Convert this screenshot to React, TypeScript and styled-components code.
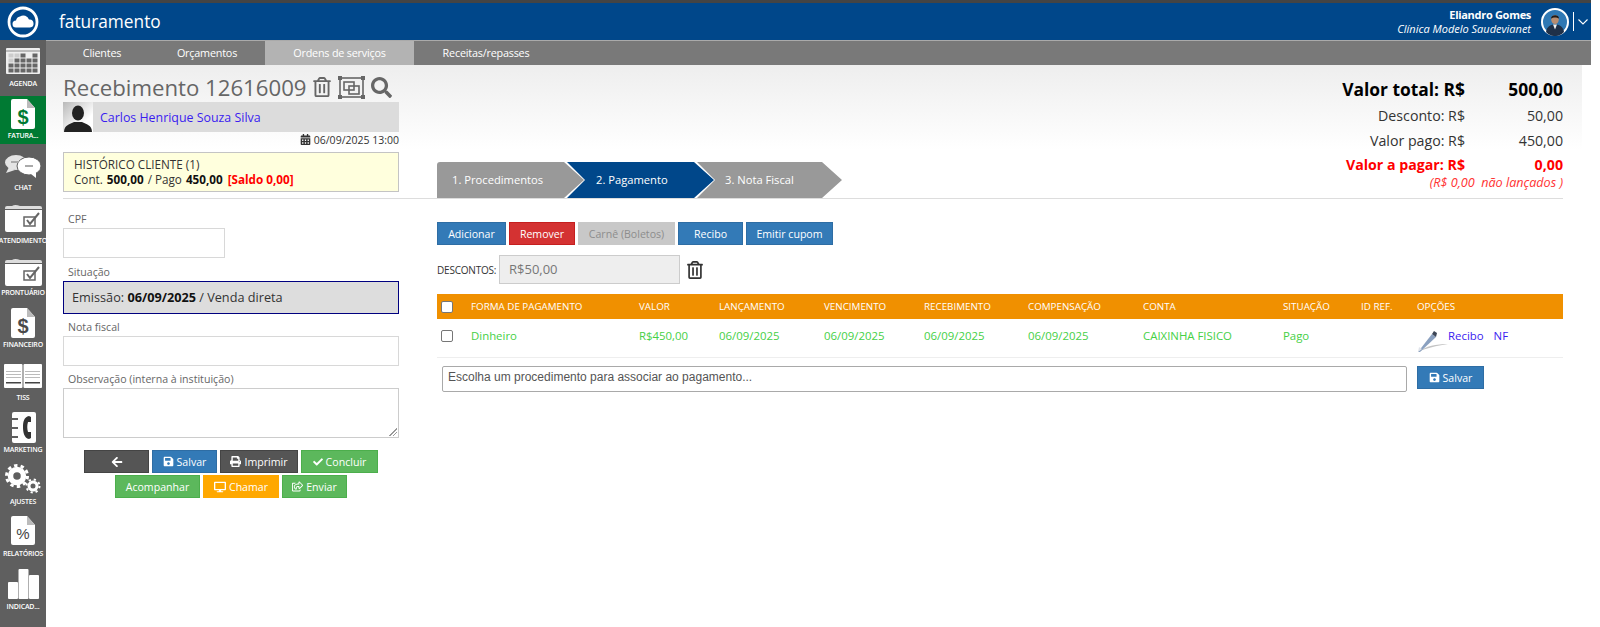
import React from "react";
import styled, { createGlobalStyle } from "styled-components";
import {
  FaArrowLeft,
  FaCalendarAlt,
  FaCheck,
  FaDesktop,
  FaPrint,
  FaRegShareSquare,
  FaRegTrashAlt,
  FaSave,
  FaSearch,
} from "react-icons/fa";

const GlobalStyle = createGlobalStyle`
  html, body {
    margin: 0;
    padding: 0;
    background: #fff;
  }
  body {
    font-family: "Open Sans", "Noto Sans", sans-serif;
    font-size: 11px;
    color: #333;
    overflow: hidden;
  }
`;

const Page = styled.div`
  display: flex;
  flex-direction: column;
  width: 1600px;
  height: 627px;
`;

const TopStrip = styled.div`
  height: 3px;
  width: 1591px;
  background: #444;
`;

const Shell = styled.div`
  display: flex;
  height: 624px;
`;

const Sidebar = styled.nav`
  width: 46px;
  flex: none;
  background: #5f5f5f;
  display: flex;
  flex-direction: column;
`;

const LogoBox = styled.div`
  height: 37px;
  background: #00478a;
  display: flex;
  align-items: center;
  justify-content: center;
`;

const NavItem = styled.div<{ $active?: boolean; $h: number; $pad: number }>`
  height: ${({ $h }) => $h}px;
  display: flex;
  flex-direction: column;
  align-items: center;
  justify-content: flex-end;
  padding-bottom: ${({ $pad }) => $pad}px;
  box-sizing: border-box;
  background: ${({ $active }) => ($active ? "#007a33" : "transparent")};
  overflow: hidden;
`;

const NavLabel = styled.span<{ $gap: number }>`
  font-size: 7px;
  font-weight: 600;
  letter-spacing: -0.2px;
  line-height: 9px;
  color: #fff;
  white-space: nowrap;
  margin-top: ${({ $gap }) => $gap}px;
`;

const Main = styled.div`
  flex: 1;
  display: flex;
  flex-direction: column;
  min-width: 0;
`;

const Header = styled.header`
  width: 1545px;
  height: 37px;
  background: #00478a;
  display: flex;
  align-items: center;
  padding: 0 3px 0 13px;
  box-sizing: border-box;
`;

const ModuleTitle = styled.div`
  font-size: 17.3px;
  color: #fff;
  flex: 1;
`;

const UserBlock = styled.div`
  text-align: right;
  color: #fff;
  line-height: 14px;
  font-size: 11px;
  margin-right: 10px;
`;

const UserName = styled.div`
  font-weight: 700;
  letter-spacing: -0.3px;
`;

const UserOrg = styled.div`
  font-style: italic;
`;

const Divider = styled.div`
  width: 1px;
  height: 19px;
  background: #fff;
  margin: 0 4px;
`;

const Tabs = styled.div`
  width: 1545px;
  height: 25px;
  background: #797979;
  border-top: 1px solid #aaa;
  box-sizing: border-box;
  padding-left: 9px;
  display: flex;
`;

const Tab = styled.div<{ $active?: boolean; $w: number }>`
  width: ${({ $w }) => $w}px;
  text-align: center;
  font-size: 10.8px;
  letter-spacing: -0.2px;
  line-height: 24px;
  color: #fff;
  background: ${({ $active }) => ($active ? "#b3b3b3" : "transparent")};
`;

const Content = styled.div`
  width: 1536px;
  flex: 1;
  padding: 0 19px 0 17px;
  box-sizing: border-box;
  background: linear-gradient(#eeeeee 0, #ffffff 85px);
  display: flex;
  flex-direction: column;
`;

const TopSection = styled.section`
  display: grid;
  grid-template-columns: 336px 1fr;
  column-gap: 38px;
  height: 134px;
  padding-top: 10px;
  box-sizing: border-box;
  border-bottom: 1px solid #ddd;
`;

const BottomSection = styled.section`
  display: grid;
  grid-template-columns: 336px 1fr;
  column-gap: 38px;
`;

const Column = styled.div`
  display: flex;
  flex-direction: column;
  min-width: 0;
`;

const TitleRow = styled.div`
  display: flex;
  align-items: center;
  height: 24px;
  color: #666;
  font-size: 22.2px;
  white-space: nowrap;
`;

const TitleIcon = styled.span<{ $ml: number }>`
  display: inline-flex;
  margin-left: ${({ $ml }) => $ml}px;
`;

const ClientBar = styled.div`
  display: flex;
  align-items: center;
  height: 30px;
  background: #dcdcdc;
  margin-top: 3px;
`;

const Avatar = styled.div`
  width: 30px;
  height: 30px;
  background: linear-gradient(135deg, #b9b9b9, #fff 70%);
  display: flex;
  align-items: flex-end;
  justify-content: center;
`;

const ClientName = styled.a`
  color: #3a1cf0;
  font-size: 12.4px;
  margin-left: 7px;
`;

const DateLine = styled.div`
  display: flex;
  justify-content: flex-end;
  align-items: center;
  gap: 3px;
  height: 15px;
  font-size: 10.5px;
  color: #333;
`;

const HistoryBox = styled.div`
  height: 40px;
  margin-top: 5px;
  padding: 4px 10px;
  box-sizing: border-box;
  background: #ffffdd;
  border: 1px solid #c4c4c4;
  font-size: 11.7px;
  line-height: 15px;
  color: #333;
  white-space: nowrap;
  b {
    color: #111;
    margin: 0 1px;
  }
`;

const Red = styled.b`
  && { color: #f00; }
`;

const FormColumn = styled(Column)`
  padding-top: 13px;
`;

const FieldLabel = styled.label`
  display: block;
  font-size: 10.6px;
  line-height: 15px;
  color: #666;
  margin-left: 5px;
`;

const Field = styled.div<{ $w?: number; $h: number; $mb: number }>`
  width: ${({ $w }) => ($w ? `${$w}px` : "100%")};
  height: ${({ $h }) => $h}px;
  margin: 1px 0 ${({ $mb }) => $mb}px;
  border: 1px solid #d8d8d8;
  box-sizing: border-box;
  background: #fff;
`;

const StatusBox = styled.div`
  height: 33px;
  margin: 1px 0 6px;
  border: 1px solid #00007f;
  box-sizing: border-box;
  background: #dddddd;
  padding-left: 8px;
  font-size: 12.7px;
  line-height: 31px;
  color: #333;
  b { color: #111; }
`;

const NoteBox = styled(Field)`
  position: relative;
  border-color: #ccc;

  &::after {
    content: "";
    position: absolute;
    right: 1px;
    bottom: 1px;
    width: 8px;
    height: 8px;
    background: linear-gradient(135deg, transparent 50%, #999 50%, #999 58%, transparent 58%, transparent 72%, #999 72%, #999 80%, transparent 80%);
  }
`;

const ActionRows = styled.div`
  display: flex;
  flex-wrap: wrap;
  justify-content: center;
  gap: 2px 3px;
  margin-top: 12px;
`;

const palette = {
  blue: ["#337ab7", "#2e6da4", "#fff"],
  dark: ["#555555", "#444444", "#fff"],
  green: ["#5cb85c", "#4cae4c", "#fff"],
  orange: ["#ffa800", "#ffa800", "#fff"],
  red: ["#d43232", "#c51f1f", "#fff"],
  gray: ["#c8c8c8", "#c8c8c8", "#8d8d8d"],
};

const Btn = styled.button<{ $kind: keyof typeof palette; $w: number }>`
  width: ${({ $w }) => $w}px;
  height: 23px;
  padding: 0;
  display: inline-flex;
  align-items: center;
  justify-content: center;
  gap: 3px;
  font-family: inherit;
  font-size: 10.6px;
  background: ${({ $kind }) => palette[$kind][0]};
  border: 1px solid ${({ $kind }) => palette[$kind][1]};
  color: ${({ $kind }) => palette[$kind][2]};
  border-radius: 0;
`;

const SummaryRow = styled.div`
  display: flex;
  justify-content: space-between;
  align-items: flex-end;
  height: 123px;
`;

const Stepper = styled.div`
  display: flex;
`;

const Step = styled.div<{ $active?: boolean; $w: number; $first?: boolean; $pad: number }>`
  width: ${({ $w }) => $w}px;
  height: 36px;
  margin-left: ${({ $first }) => ($first ? 0 : -17)}px;
  padding-left: ${({ $pad }) => $pad}px;
  box-sizing: border-box;
  font-size: 11.2px;
  line-height: 36px;
  color: #fff;
  background: ${({ $active }) => ($active ? "#00478a" : "#999999")};
  border-radius: ${({ $first }) => ($first ? "3px 0 0 0" : "0")};
  clip-path: ${({ $first }) =>
    $first
      ? "polygon(0 0, calc(100% - 20px) 0, 100% 50%, calc(100% - 20px) 100%, 0 100%)"
      : "polygon(0 0, calc(100% - 20px) 0, 100% 50%, calc(100% - 20px) 100%, 0 100%, 18px 50%)"};
`;

const Totals = styled.div`
  width: 240px;
  margin-bottom: 9px;
  color: #333;
`;

const TotalLine = styled.div<{ $size: number; $h: number; $bold?: boolean; $red?: boolean }>`
  display: grid;
  grid-template-columns: 1fr 98px;
  height: ${({ $h }) => $h}px;
  line-height: ${({ $h }) => $h}px;
  font-size: ${({ $size }) => $size}px;
  font-weight: ${({ $bold }) => ($bold ? 700 : 400)};
  color: ${({ $red, $bold }) => ($red ? "#f00" : $bold ? "#000" : "#333")};
  text-align: right;
  white-space: nowrap;
`;

const Pending = styled.div`
  text-align: right;
  font-size: 12.6px;
  font-style: italic;
  line-height: 12px;
  color: #f33;
  white-space: nowrap;
`;

const Toolbar = styled.div`
  display: flex;
  gap: 3px;
  margin-top: 23px;
`;

const DiscountRow = styled.div`
  display: flex;
  align-items: center;
  margin-top: 10px;
  height: 29px;
`;

const DiscountLabel = styled.span`
  font-size: 10px;
  letter-spacing: -0.2px;
  width: 62px;
  color: #333;
`;

const DiscountInput = styled.div`
  width: 181px;
  height: 29px;
  box-sizing: border-box;
  border: 1px solid #ccc;
  background: #eeeeee;
  padding-left: 9px;
  font-size: 13px;
  line-height: 27px;
  color: #777;
`;

const TrashButton = styled.span`
  display: inline-flex;
  margin-left: 6px;
  color: #333;
`;

const Table = styled.div`
  margin-top: 10px;
`;

const columns = "34px 168px 80px 105px 100px 104px 115px 140px 78px 56px 146px";

const HeadRow = styled.div`
  display: grid;
  grid-template-columns: ${columns};
  height: 25px;
  align-items: center;
  background: #f09000;
  color: #fff;
  font-size: 9.8px;
  white-space: nowrap;
`;

const BodyRow = styled.div`
  display: grid;
  grid-template-columns: ${columns};
  height: 39px;
  padding-bottom: 8px;
  align-items: center;
  border-bottom: 1px solid #eee;
  box-sizing: border-box;
  color: #45d045;
  font-size: 11.4px;
  white-space: nowrap;
`;

const Check = styled.span`
  width: 10px;
  height: 10px;
  margin-left: 4px;
  border: 1px solid #767676;
  border-radius: 2px;
  background: #fff;
  display: block;
`;

const OptionLinks = styled.div`
  display: flex;
  align-items: center;
  color: #3a1cf0;
`;

const Pencil = styled.span`
  display: inline-flex;
  width: 30px;
  margin: 12px 0 0 1px;
`;

const NfLink = styled.span`
  margin-left: 10px;
`;

const AssociateRow = styled.div`
  display: flex;
  align-items: flex-start;
  gap: 10px;
  margin-top: 8px;
  margin-left: 5px;
`;

const AssociateInput = styled.div`
  width: 965px;
  height: 26px;
  box-sizing: border-box;
  border: 1px solid #a9a9a9;
  border-radius: 2px;
  padding-left: 5px;
  font-family: "Liberation Sans", Arial, sans-serif;
  font-size: 12px;
  line-height: 20px;
  color: #555;
`;

const navItems = [
  { label: "AGENDA", h: 56, pad: 8.5, gap: 4.5, icon: "calendar" },
  { label: "FATURA...", h: 48, pad: 4.5, gap: 1.5, icon: "doc", active: true },
  { label: "CHAT", h: 52, pad: 4.5, gap: 4.5, icon: "chat" },
  { label: "ATENDIMENTO", h: 53, pad: 4.5, gap: 3.5, icon: "folder" },
  { label: "PRONTUÁRIO", h: 52, pad: 4.5, gap: 1.5, icon: "folder" },
  { label: "FINANCEIRO", h: 52, pad: 4.5, gap: 1.5, icon: "doc" },
  { label: "TISS", h: 53, pad: 4.5, gap: 4.5, icon: "book" },
  { label: "MARKETING", h: 52, pad: 4.5, gap: 1.5, icon: "phone" },
  { label: "AJUSTES", h: 52, pad: 4.5, gap: 2.5, icon: "gears" },
  { label: "RELATÓRIOS", h: 52, pad: 4.5, gap: 3.5, icon: "percent" },
  { label: "INDICAD...", h: 53, pad: 4.5, gap: 2.5, icon: "bars" },
];

const NavIcon = ({ kind, active }: { kind: string; active?: boolean }) => {
  const ink = active ? "#007a33" : "#4a4a4a";
  switch (kind) {
    case "calendar":
      return (
        <svg width="34" height="26" viewBox="0 0 34 26">
          <rect x="0" y="0" width="34" height="26" rx="1" fill="#eee" />
          <rect x="0" y="2.5" width="34" height="1" fill="#888" />
          {[0, 1, 2, 3].map((r) =>
            [0, 1, 2, 3, 4].map((c) => (
              <rect
                key={`${r}-${c}`}
                x={2.5 + c * 6}
                y={5.5 + r * 5}
                width="5"
                height="4"
                fill={r === 0 && c === 3 ? "#eee" : c + r < 2 ? "#ccc" : "#666"}
              />
            ))
          )}
        </svg>
      );
    case "doc":
      return (
        <svg width="24" height="30" viewBox="0 0 24 30">
          <path d="M2 0h14l8 9v19a2 2 0 0 1-2 2H2a2 2 0 0 1-2-2V2a2 2 0 0 1 2-2z" fill="#fff" />
          <path d="M16 0v9h8z" fill="#bbb" />
          <text x="12" y="24.5" textAnchor="middle" fontSize="20" fontWeight="700" fontFamily="Liberation Sans" fill={ink}>
            $
          </text>
        </svg>
      );
    case "chat":
      return (
        <svg width="36" height="23" viewBox="0 0 36 23">
          <ellipse cx="11" cy="7.5" rx="11" ry="7.5" fill="#e4e4e4" />
          <path d="M4 12l-3 6 9-3z" fill="#e4e4e4" />
          <ellipse cx="24" cy="11" rx="12" ry="9" fill="#fff" stroke="#5f5f5f" />
          <path d="M26 19l5 4 0-6z" fill="#fff" />
          <rect x="6" y="6" width="8" height="2" fill="#aaa" />
          <rect x="20" y="10" width="8" height="2" fill="#aaa" />
        </svg>
      );
    case "folder":
      return (
        <svg width="37" height="27" viewBox="0 0 37 27">
          <path d="M0 3q0-2 2-2h5q3-2 8 0h20q2 0 2 2v1H0z" fill="#ddd" />
          <path d="M0 5h37v20q0 2-2 2H2q-2 0-2-2z" fill="#fff" />
          <rect x="19" y="12" width="11" height="9" fill="none" stroke="#666" strokeWidth="1.5" />
          <path d="M22 15l3 4 9-11" fill="none" stroke="#666" strokeWidth="2" />
        </svg>
      );
    case "book":
      return (
        <svg width="38" height="24" viewBox="0 0 38 24">
          <rect x="0" y="0" width="18.5" height="24" rx="1" fill="#fff" />
          <rect x="19.5" y="0" width="18.5" height="24" rx="1" fill="#fff" />
          {[7, 10, 13].map((y) => (
            <g key={y} fill="#bbb">
              <rect x="2" y={y} width="15" height="1" />
              <rect x="21" y={y} width="15" height="1" />
            </g>
          ))}
          <rect x="2" y="18" width="15" height="1.5" fill="#444" />
          <rect x="21" y="18" width="15" height="1.5" fill="#444" />
        </svg>
      );
    case "phone":
      return (
        <svg width="25" height="31" viewBox="0 0 25 31">
          <rect x="1" y="0" width="24" height="31" rx="2" fill="#fff" />
          <g fill="#5f5f5f">
            <rect x="0" y="6" width="7" height="2" />
            <rect x="0" y="15" width="7" height="2" />
            <rect x="0" y="24" width="7" height="2" />
          </g>
          <path d="M18 4c-5 1-6 6-6 11s1 11 6 12l2-1v-6h-3c-1-3-1-7 0-10h3V5z" fill="#333" />
        </svg>
      );
    case "gears":
      return (
        <svg width="36" height="30" viewBox="0 0 36 30">
          <circle cx="12" cy="12" r="6.5" fill="none" stroke="#fff" strokeWidth="5.5" />
          <circle cx="12" cy="12" r="10.5" fill="none" stroke="#fff" strokeWidth="3" strokeDasharray="3.4 3.2" />
          <circle cx="28" cy="22" r="4" fill="none" stroke="#fff" strokeWidth="3" />
          <circle cx="28" cy="22" r="6.5" fill="none" stroke="#fff" strokeWidth="2" strokeDasharray="2.2 2.9" />
        </svg>
      );
    case "percent":
      return (
        <svg width="24" height="29" viewBox="0 0 24 29">
          <path d="M2 0h14l8 9v18a2 2 0 0 1-2 2H2a2 2 0 0 1-2-2V2a2 2 0 0 1 2-2z" fill="#fff" />
          <path d="M16 0v9h8z" fill="#bbb" />
          <text x="12" y="23" textAnchor="middle" fontSize="15" fontFamily="Liberation Sans" fill="#444">
            %
          </text>
        </svg>
      );
    default:
      return (
        <svg width="31" height="30" viewBox="0 0 31 30">
          <rect x="0" y="13" width="10" height="17" rx="1" fill="#fff" />
          <rect x="10.5" y="0" width="10" height="30" rx="1" fill="#fff" />
          <rect x="21" y="6" width="10" height="24" rx="1" fill="#fff" />
        </svg>
      );
  }
};

const SelectionIcon = () => (
  <svg width="27" height="23" viewBox="0 0 27 23" fill="none" stroke="#666" strokeWidth="1.6">
    <rect x="2" y="2" width="23" height="19" />
    <rect x="6" y="6" width="10" height="8" />
    <rect x="11" y="10" width="10" height="8" />
    <g fill="#666" stroke="none">
      <rect x="0" y="0" width="4" height="4" />
      <rect x="23" y="0" width="4" height="4" />
      <rect x="0" y="19" width="4" height="4" />
      <rect x="23" y="19" width="4" height="4" />
    </g>
  </svg>
);

const PencilIcon = () => (
  <svg width="30" height="21" viewBox="0 0 30 21">
    <path d="M0 21c8-6 18-8 30-8-12 2-21 4-30 8z" fill="#c4c4c4" />
    <path d="M0 21L14 3l4 3L2 21z" fill="#8aa0bf" />
    <path d="M14 3l2-3 3 2-1 4z" fill="#3d4656" />
    <path d="M0 21l1-5 3 2z" fill="#dfe3ea" />
  </svg>
);

const UserPhoto = () => (
  <svg width="28" height="28" viewBox="0 0 28 28">
    <circle cx="14" cy="14" r="13" fill="#2f78b4" stroke="#fff" strokeWidth="2" />
    <path d="M5 24c1-6 5-7.500 9-7.500s8 1.500 9 7.500a12 12 0 0 1-18 0z" fill="#1f3048" />
    <path d="M12 16.500h4l-2 5z" fill="#f2f2f2" />
    <ellipse cx="14" cy="11.500" rx="3.800" ry="4.600" fill="#b98d70" />
    <path d="M10 10.500c0-4 8-4.500 8 0-2-1.500-6-1.500-8 0z" fill="#1e1a18" />
  </svg>
);

const App = () => (
  <Page>
    <GlobalStyle />
    <TopStrip />
    <Shell>
      <Sidebar>
        <LogoBox>
          <svg width="32" height="32" viewBox="0 0 32 32">
            <circle cx="16" cy="16" r="14" fill="none" stroke="#fff" strokeWidth="2.800" />
            <path d="M9 21.500a3.500 3.500 0 0 1 0-7 5 5 0 0 1 4-4 6 6 0 0 1 9 3 4 4 0 0 1 1 8z" fill="#fff" />
          </svg>
        </LogoBox>
        {navItems.map((item) => (
          <NavItem key={item.label} $active={item.active} $h={item.h} $pad={item.pad}>
            <NavIcon kind={item.icon} active={item.active} />
            <NavLabel $gap={item.gap}>{item.label}</NavLabel>
          </NavItem>
        ))}
      </Sidebar>
      <Main>
        <Header>
          <ModuleTitle>faturamento</ModuleTitle>
          <UserBlock>
            <UserName>Eliandro Gomes</UserName>
            <UserOrg>Clínica Modelo Saudevianet</UserOrg>
          </UserBlock>
          <UserPhoto />
          <Divider />
          <svg width="10" height="6" viewBox="0 0 10 6" fill="none" stroke="#fff" strokeWidth="1.100">
            <path d="M0.500 0.500L5 5l4.500-4.500" />
          </svg>
        </Header>
        <Tabs>
          <Tab $w={94}>Clientes</Tab>
          <Tab $w={116}>Orçamentos</Tab>
          <Tab $w={149} $active>Ordens de serviços</Tab>
          <Tab $w={144}>Receitas/repasses</Tab>
        </Tabs>
        <Content>
          <TopSection>
            <Column>
              <TitleRow>
                Recebimento 12616009
                <TitleIcon $ml={5}><FaRegTrashAlt size={20} /></TitleIcon>
                <TitleIcon $ml={6}><SelectionIcon /></TitleIcon>
                <TitleIcon $ml={6}><FaSearch size={21} /></TitleIcon>
              </TitleRow>
              <ClientBar>
                <Avatar>
                  <svg width="28" height="28" viewBox="0 0 28 28" fill="#222">
                    <ellipse cx="14" cy="9" rx="6" ry="7.500" />
                    <path d="M0 28c0-7 6-8 10-10h8c4 2 10 3 10 10z" />
                  </svg>
                </Avatar>
                <ClientName>Carlos Henrique Souza Silva</ClientName>
              </ClientBar>
              <DateLine>
                <FaCalendarAlt size={11} />
                06/09/2025 13:00
              </DateLine>
              <HistoryBox>
                HISTÓRICO CLIENTE (1)
                <br />
                Cont. <b>500,00</b> / Pago <b>450,00</b> <Red>[Saldo 0,00]</Red>
              </HistoryBox>
            </Column>
            <SummaryRow>
              <Stepper>
                <Step $first $w={147} $pad={15}>1. Procedimentos</Step>
                <Step $active $w={147} $pad={29}>2. Pagamento</Step>
                <Step $w={145} $pad={28}>3. Nota Fiscal</Step>
              </Stepper>
              <Totals>
                <TotalLine $size={17.4} $h={26} $bold>
                  <span>Valor total: R$</span>
                  <span>500,00</span>
                </TotalLine>
                <TotalLine $size={14.2} $h={27}>
                  <span>Desconto: R$</span>
                  <span>50,00</span>
                </TotalLine>
                <TotalLine $size={14.2} $h={24}>
                  <span>Valor pago: R$</span>
                  <span>450,00</span>
                </TotalLine>
                <TotalLine $size={14.2} $h={24} $bold $red>
                  <span>Valor a pagar: R$</span>
                  <span>0,00</span>
                </TotalLine>
                <Pending>(R$ 0,00&nbsp; não lançados )</Pending>
              </Totals>
            </SummaryRow>
          </TopSection>
          <BottomSection>
            <FormColumn>
              <FieldLabel>CPF</FieldLabel>
              <Field $w={162} $h={30} $mb={7} />
              <FieldLabel>Situação</FieldLabel>
              <StatusBox>
                Emissão: <b>06/09/2025</b> / Venda direta
              </StatusBox>
              <FieldLabel>Nota fiscal</FieldLabel>
              <Field $h={30} $mb={6} />
              <FieldLabel>Observação (interna à instituição)</FieldLabel>
              <NoteBox $h={50} $mb={0} />
              <ActionRows>
                <Btn $kind="dark" $w={65}><FaArrowLeft size={12} /></Btn>
                <Btn $kind="blue" $w={65}><FaSave size={11} />Salvar</Btn>
                <Btn $kind="dark" $w={78}><FaPrint size={11} />Imprimir</Btn>
                <Btn $kind="green" $w={77}><FaCheck size={10} />Concluir</Btn>
                <Btn $kind="green" $w={85}>Acompanhar</Btn>
                <Btn $kind="orange" $w={76}><FaDesktop size={12} />Chamar</Btn>
                <Btn $kind="green" $w={65}><FaRegShareSquare size={11} />Enviar</Btn>
              </ActionRows>
            </FormColumn>
            <Column>
              <Toolbar>
                <Btn $kind="blue" $w={69}>Adicionar</Btn>
                <Btn $kind="red" $w={66}>Remover</Btn>
                <Btn $kind="gray" $w={97}>Carnê (Boletos)</Btn>
                <Btn $kind="blue" $w={65}>Recibo</Btn>
                <Btn $kind="blue" $w={87}>Emitir cupom</Btn>
              </Toolbar>
              <DiscountRow>
                <DiscountLabel>DESCONTOS:</DiscountLabel>
                <DiscountInput>R$50,00</DiscountInput>
                <TrashButton><FaRegTrashAlt size={18} /></TrashButton>
              </DiscountRow>
              <Table>
                <HeadRow>
                  <Check />
                  <span>FORMA DE PAGAMENTO</span>
                  <span>VALOR</span>
                  <span>LANÇAMENTO</span>
                  <span>VENCIMENTO</span>
                  <span>RECEBIMENTO</span>
                  <span>COMPENSAÇÃO</span>
                  <span>CONTA</span>
                  <span>SITUAÇÃO</span>
                  <span>ID REF.</span>
                  <span>OPÇÕES</span>
                </HeadRow>
                <BodyRow>
                  <Check />
                  <span>Dinheiro</span>
                  <span>R$450,00</span>
                  <span>06/09/2025</span>
                  <span>06/09/2025</span>
                  <span>06/09/2025</span>
                  <span>06/09/2025</span>
                  <span>CAIXINHA FISICO</span>
                  <span>Pago</span>
                  <span />
                  <OptionLinks>
                    <Pencil><PencilIcon /></Pencil>
                    <span>Recibo</span>
                    <NfLink>NF</NfLink>
                  </OptionLinks>
                </BodyRow>
              </Table>
              <AssociateRow>
                <AssociateInput>Escolha um procedimento para associar ao pagamento...</AssociateInput>
                <Btn $kind="blue" $w={67}><FaSave size={11} />Salvar</Btn>
              </AssociateRow>
            </Column>
          </BottomSection>
        </Content>
      </Main>
    </Shell>
  </Page>
);

export default App;
